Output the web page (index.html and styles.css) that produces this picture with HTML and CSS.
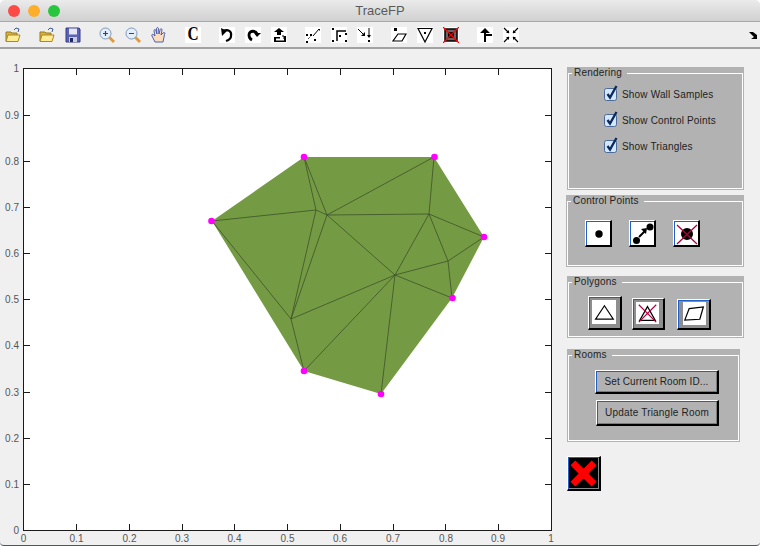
FILE: index.html
```html
<!DOCTYPE html>
<html lang="en">
<head>
    <meta charset="UTF-8">
    <meta name="viewport" content="width=device-width, initial-scale=1.0">
    <title>TraceFP</title>
    <link rel="stylesheet" href="styles.css">
</head>
<body>
<div class="window">
    <div class="titlebar">
        <div class="lights">
            <span class="light red"></span>
            <span class="light orange"></span>
            <span class="light green"></span>
        </div>
        <div class="title">TraceFP</div>
    </div>

    <!-- Toolbar -->
    <div class="toolbar">
        <svg class="tool" viewBox="0 0 16 16"><path d="M9 3l2-2 3 1-1 3" fill="none" stroke="#3a5a90"/><path d="M1 5h5l1 1h5v8H1z" fill="#d8b040" stroke="#9a7a18"/><path d="M3 8h12l-2 6.500H1z" fill="#ffec94" stroke="#a88a20"/></svg>
        <svg class="tool sep" viewBox="0 0 16 16"><path d="M9 3l2-2 3 1-1 3" fill="none" stroke="#3a5a90"/><path d="M1 5h5l1 1h5v8H1z" fill="#d8b040" stroke="#9a7a18"/><path d="M3 8h12l-2 6.500H1z" fill="#ffec94" stroke="#a88a20"/></svg>
        <svg class="tool" viewBox="0 0 16 16"><path d="M1 1h13l1 1v13H1z" fill="#5a62b8" stroke="#343c84"/><rect x="4" y="1.500" width="8" height="6" fill="#e4e6f4"/><rect x="4" y="10" width="8" height="5" fill="#c8cce4"/><rect x="5" y="11" width="3" height="4" fill="#20285c"/></svg>
        <svg class="tool sep" viewBox="0 0 16 16"><path d="M10 10l5 5" stroke="#e09838" stroke-width="2.800"/><circle cx="6.500" cy="6.500" r="5.500" fill="#e4eefa" stroke="#7c98b8"/><path d="M4 6.500h5M6.500 4v5" stroke="#2a3f9c" stroke-width="1.200"/></svg>
        <svg class="tool" viewBox="0 0 16 16"><path d="M10 10l5 5" stroke="#e09838" stroke-width="2.800"/><circle cx="6.500" cy="6.500" r="5.500" fill="#e4eefa" stroke="#7c98b8"/><path d="M4 6.500h5" stroke="#2a3f9c" stroke-width="1.200"/></svg>
        <svg class="tool" viewBox="0 0 16 16"><path d="M4 15L1 9c-1-2 1-2 2-1l1 1-1-5c0-2 2-2 2 0l1 3-.5-5c0-2 2-2 2 0l.5 5 1-4c.5-2 2-1.500 2 0l-1 5 2-2c1.500-1 2.500 0 1.500 1.500L12 15z" fill="#fbdcc0" stroke="#3a52a8" stroke-width=".9"/></svg>
        <div class="tool sep boxed c-tool"><span>C</span></div>
        <svg class="tool sep boxed" viewBox="0 0 16 16"><path d="M4 4c5-2 9 0 8 5 0 2-2 4-5 5" fill="none" stroke="#000" stroke-width="2.200"/><path d="M2 1l1 8 5-5z"/></svg>
        <svg class="tool boxed" viewBox="0 0 16 16"><path d="M12 8c0-5-8-5-8 0 0 2 1 4 3 5" fill="none" stroke="#000" stroke-width="2.800"/><path d="M16 6l-4 4-3-4z"/></svg>
        <svg class="tool boxed" viewBox="0 0 16 16"><path d="M8 1L3 5h3v3h4V5h3zM3 10h6v1.500H5v2h8V9h2v6H3z"/><path d="M11 9h2v3h2" fill="none" stroke="#000"/></svg>
        <svg class="tool sep boxed" viewBox="0 0 16 16"><path d="M8 9l6-7" stroke="#000" fill="none"/><path d="M13 2h2v2z"/><path d="M1 14h2v2H1zM5 7h2v2H5zM1 7h2v2H1zM9 12h2v2H9z"/><path d="M3 12l3-3" stroke="#000" stroke-dasharray="1 1"/></svg>
        <svg class="tool boxed" viewBox="0 0 16 16"><path d="M6 14V4h9" fill="none" stroke="#000" stroke-width="1.500"/><path d="M1 1h2v2H1zM1 13h2v2H1zM14 6h2v2h-2zM14 13h2v2h-2zM8 8h2v2H8z"/></svg>
        <svg class="tool boxed" viewBox="0 0 16 16"><path d="M1 2l7 7M12 1v9" stroke="#000" fill="none"/><path d="M8 9H4l4-4zM10 8h4l-2 3z"/><path d="M11 13h2v2h-2z"/></svg>
        <svg class="tool sep boxed" viewBox="0 0 16 16"><path d="M7 7h8l-4 7H2z" fill="none" stroke="#000" stroke-width="1.200"/><path d="M3 1h3v3H3z"/></svg>
        <svg class="tool boxed" viewBox="0 0 16 16"><path d="M1 1.500h14L8 15z" fill="none" stroke="#000" stroke-width="1.200"/><path d="M7 5h2v2H7z"/></svg>
        <svg class="tool boxed" viewBox="0 0 16 16"><rect x="2" y="2" width="12" height="12" fill="#666" stroke="#000" stroke-width="1.500"/><rect x="5" y="5" width="6" height="6"/><path d="M0 0l16 16M16 0L0 16" stroke="#f00" stroke-width="1.300"/></svg>
        <svg class="tool sep boxed" viewBox="0 0 16 16"><path d="M8 1L3 6h4v9h2V6h4z"/><path d="M9 7h6v2H9z"/></svg>
        <svg class="tool boxed" viewBox="0 0 16 16"><path d="M1 1l5 5M15 1l-5 5M1 15l5-5M15 15l-5-5" stroke="#000" stroke-width="1.200"/><path d="M6 3v3H3zM10 3v3h3zM6 13v-3H3zM10 13v-3h3z"/></svg>
        <svg class="chevron" viewBox="0 0 8 7"><path d="M0 0h4l4 3v4H2l3-2z"/></svg>
    </div>

    <div class="main">
        <svg class="plot" viewBox="0 49 556 497" width="556" height="497">
            <rect x="23.500" y="68.500" width="528" height="462" fill="#fff"/>
            <path class="floor" d="M304 157H434L484 237 452 298 381 394 304 371 212 221Z"/>
            <path class="mesh" d="M304 157L316 210M304 157L327 215M212 221L316 210M212 221L291 319M316 210L291 319M316 210L327 215M327 215L291 319M327 215L434 157M327 215L429 214M327 215L395 275M434 157L429 214M429 214L484 237M429 214L448 261M429 214L395 275M448 261L484 237M448 261L452 298M448 261L395 275M395 275L452 298M395 275L381 394M395 275L304 371M395 275L291 319M291 319L304 371"/>
            <g class="pts">
                <circle cx="304" cy="157" r="3.300"/><circle cx="434.500" cy="157" r="3.300"/><circle cx="484" cy="237" r="3.300"/>
                <circle cx="452.500" cy="298" r="3.300"/><circle cx="381" cy="394" r="3.300"/><circle cx="304" cy="371" r="3.300"/>
                <circle cx="211.500" cy="221" r="3.300"/>
            </g>
            <rect class="frame" x="23.500" y="68.500" width="528" height="462"/>
            <path class="ticks" d="M76.500 530v-6M129.500 530v-6M182.500 530v-6M234.500 530v-6M287.500 530v-6M340.500 530v-6M393.500 530v-6M445.500 530v-6M498.500 530v-6M76.500 69v6M129.500 69v6M182.500 69v6M234.500 69v6M287.500 69v6M340.500 69v6M393.500 69v6M445.500 69v6M498.500 69v6M24 484.500h6M24 438.500h6M24 392.500h6M24 345.500h6M24 299.500h6M24 253.500h6M24 207.500h6M24 161.500h6M24 115.500h6M551 484.500h-6M551 438.500h-6M551 392.500h-6M551 345.500h-6M551 299.500h-6M551 253.500h-6M551 207.500h-6M551 161.500h-6M551 115.500h-6"/>
            <g class="xlabels">
                <text x="23.500" y="542">0</text><text x="76.500" y="542">0.1</text><text x="129.500" y="542">0.2</text><text x="182" y="542">0.3</text><text x="234.500" y="542">0.4</text><text x="287.500" y="542">0.5</text><text x="340" y="542">0.6</text><text x="393" y="542">0.7</text><text x="446" y="542">0.8</text><text x="498" y="542">0.9</text><text x="551" y="542">1</text>
            </g>
            <g class="ylabels">
                <text x="19" y="534">0</text><text x="19" y="488">0.1</text><text x="19" y="442">0.2</text><text x="19" y="396">0.3</text><text x="19" y="349">0.4</text><text x="19" y="303">0.5</text><text x="19" y="257">0.6</text><text x="19" y="211">0.7</text><text x="19" y="165">0.8</text><text x="19" y="119">0.9</text><text x="19" y="72">1</text>
            </g>
        </svg>

        <div class="side">
            <div class="panel">
                <fieldset>
                    <legend>Rendering</legend>
                    <div class="rendering">
                        <label class="check-row"><svg class="check" viewBox="0 0 14 16"><rect x=".5" y="3.500" width="12" height="12" rx="2" fill="#d4e6fa" stroke="#4a6a9c"/><path d="M3.500 9l2.500 3.500L12.500 1" fill="none" stroke="#0a2a5c" stroke-width="2.300"/></svg>Show Wall Samples</label>
                        <label class="check-row"><svg class="check" viewBox="0 0 14 16"><rect x=".5" y="3.500" width="12" height="12" rx="2" fill="#d4e6fa" stroke="#4a6a9c"/><path d="M3.500 9l2.500 3.500L12.500 1" fill="none" stroke="#0a2a5c" stroke-width="2.300"/></svg>Show Control Points</label>
                        <label class="check-row"><svg class="check" viewBox="0 0 14 16"><rect x=".5" y="3.500" width="12" height="12" rx="2" fill="#d4e6fa" stroke="#4a6a9c"/><path d="M3.500 9l2.500 3.500L12.500 1" fill="none" stroke="#0a2a5c" stroke-width="2.300"/></svg>Show Triangles</label>
                    </div>
                </fieldset>
            </div>

            <div class="panel points-panel">
                <fieldset>
                    <legend>Control Points</legend>
                    <div class="points">
                        <button class="icon-btn small"><svg viewBox="0 0 24 24"><circle cx="12" cy="12" r="3.700"/></svg></button>
                        <button class="icon-btn small"><svg viewBox="0 0 24 24"><circle cx="5.500" cy="18.500" r="3.500"/><circle cx="19" cy="5" r="3.500"/><path d="M8 15l6-6" stroke="#000" stroke-width="2"/><path d="M16 6l-6 1 5 5z"/></svg></button>
                        <button class="icon-btn small"><svg viewBox="0 0 24 24"><circle cx="12" cy="12" r="6"/><path d="M2 3l20 19M22 3L2 22" stroke="#b00040" stroke-width="1.300"/></svg></button>
                    </div>
                </fieldset>
            </div>

            <div class="panel polygons-panel">
                <fieldset>
                    <legend>Polygons</legend>
                    <div class="polygons">
                        <button class="icon-btn large"><svg viewBox="0 0 27 26"><path d="M14 6L24 21H4z" fill="none" stroke="#000" stroke-width="1.300"/></svg></button>
                        <button class="icon-btn large second"><svg viewBox="0 0 25 24"><path d="M12.500 5L21 20H4z" fill="none" stroke="#000" stroke-width="1.300"/><path d="M3 3l19 19M22 3L3 22" stroke="#b00040" stroke-width="1.300"/></svg></button>
                        <button class="icon-btn large third"><svg viewBox="0 0 26 23"><path d="M2 19L7 6l16-2-4 14z" fill="none" stroke="#000" stroke-width="1.400"/></svg></button>
                    </div>
                </fieldset>
            </div>

            <div class="panel rooms-panel">
                <fieldset>
                    <legend>Rooms</legend>
                    <div class="rooms">
                        <button class="text-btn">Set Current Room ID...</button>
                        <button class="text-btn update">Update Triangle Room</button>
                    </div>
                </fieldset>
            </div>

            <button class="icon-btn close"><svg viewBox="0 0 30 30"><path d="M4 4l22 22M26 4L4 26" stroke="#f00" stroke-width="7"/></svg></button>
        </div>
    </div>
</div>
</body>
</html>
```

FILE: styles.css
```css
body {
    margin: 0;
    background: #fff;
    font-family: "Liberation Sans", Arial, sans-serif;
}
.window {
    width: 760px;
    height: 546px;
    box-sizing: border-box;
    background-color: #f0f0f0;
    border-bottom: 1px solid #4c5660;
    border-radius: 5px 5px 4px 4px;
    overflow: hidden;
}

/* Title bar */
.titlebar {
    height: 22px;
    box-sizing: border-box;
    display: flex;
    align-items: center;
    background: linear-gradient(#ebebeb, #d0d0d0);
    border-bottom: 1px solid #a8a8a8;
}
.lights {
    display: flex;
    gap: 8px;
    margin-left: 8px;
}
.light {
    width: 12px;
    height: 12px;
    border-radius: 50%;
}
.red {
    background-color: #fc4b47;
}
.orange {
    background-color: #fdae2b;
}
.green {
    background-color: #28c63f;
}
.title {
    flex: 1;
    margin-left: -60px;
    text-align: center;
    font-size: 13px;
    color: #5a5a5a;
}

/* Toolbar */
.toolbar {
    height: 27px;
    box-sizing: border-box;
    display: flex;
    align-items: center;
    gap: 10px;
    padding: 1px 3px 0 5px;
    background-color: #eeeeee;
    border-bottom: 2px solid #a2a2a2;
}
.tool {
    width: 16px;
    height: 16px;
    flex: none;
}
.tool.sep {
    margin-left: 8px;
}
.tool.boxed {
    background-color: #fff;
}
.c-tool {
    display: flex;
    align-items: center;
    justify-content: center;
    font-family: "Liberation Serif", serif;
    font-weight: bold;
    font-size: 14px;
    line-height: 16px;
}
.c-tool span {
    transform: scale(1.1, 1.35);
}
.chevron {
    width: 8px;
    height: 7px;
    margin-left: auto;
}

/* Main area */
.main {
    display: flex;
}
.plot {
    flex: none;
    display: block;
}
.floor {
    fill: #749b44;
}
.mesh {
    fill: none;
    stroke: #3d5228;
    stroke-width: 0.8;
}
.pts {
    fill: #ff00ff;
}
.frame {
    fill: none;
    stroke: #1a1a1a;
    stroke-width: 1;
}
.ticks {
    fill: none;
    stroke: #1a1a1a;
    stroke-width: 1;
}
.xlabels text,
.ylabels text {
    font-size: 10px;
    fill: #555;
}
.xlabels text {
    text-anchor: middle;
}
.ylabels text {
    text-anchor: end;
}

/* Side panels */
.side {
    margin-left: 11px;
    padding-top: 18px;
    width: 177px;
}
.panel {
    background-color: #b2b2b2;
    padding: 0 1px 1px 1px;
    color: #222;
    font-size: 10px;
}
fieldset {
    margin: 0;
    padding: 0;
    border: 1px solid #fff;
    min-width: 0;
}
legend {
    margin-left: 3px;
    padding: 0 5px 0 2px;
    line-height: 12px;
    letter-spacing: 0.2px;
}
.rendering {
    padding: 9px 0 35px 35px;
    display: flex;
    flex-direction: column;
}
.check-row {
    display: flex;
    align-items: center;
    height: 13px;
    margin-bottom: 13px;
    letter-spacing: 0.17px;
}
.check-row:last-child {
    margin-bottom: 0;
}
.check {
    width: 14px;
    height: 16px;
    margin: -4px 4px 0 0;
    flex: none;
}
.points-panel {
    margin: 5px 0 0 -1px;
}
.points {
    padding: 13px 0 18px 17px;
    display: flex;
    gap: 17px;
}
.polygons-panel {
    margin-top: 9px;
}
.polygons {
    padding: 8px 0 6px 19px;
    display: flex;
    align-items: flex-end;
    gap: 10px;
}
.rooms-panel {
    margin-top: 11px;
    width: 171px;
}
.rooms {
    padding: 9px 0 14px 26px;
}

/* Buttons */
button {
    padding: 0;
    font-family: inherit;
    box-sizing: border-box;
    border-style: solid;
    border-width: 1px 2px 2px 1px;
    border-color: #fff #000 #000 #fff;
    box-shadow: inset 1px 1px 0 #1f5fc8;
}
button svg {
    display: block;
}
.icon-btn {
    background-color: #fff;
}
.icon-btn.small {
    width: 27px;
    height: 27px;
    padding: 1px 0 0 1px;
}
.icon-btn.small svg {
    width: 24px;
    height: 24px;
}
.icon-btn.large {
    width: 34px;
    height: 34px;
    padding: 3px 4px 4px 3px;
    background-color: #8e8e8e;
}
.icon-btn.large svg {
    width: 100%;
    height: 100%;
    background-color: #fff;
}
.icon-btn.large.second {
    width: 33px;
    height: 32px;
}
.icon-btn.large.third {
    height: 31px;
    margin-left: 2px;
    padding: 2px 3px 3px 5px;
}
.text-btn {
    display: block;
    width: 124px;
    height: 24px;
    background-color: #b2b2b2;
    color: #222;
    font-size: 10px;
    letter-spacing: 0.1px;
    box-shadow: inset 1px 1px 0 #1f5fc8, inset -1px -1px 0 #7c7c7c;
}
.text-btn.update {
    width: 123px;
    height: 26px;
    margin: 6px 0 0 1px;
    letter-spacing: 0.2px;
}
.icon-btn.close {
    display: block;
    width: 34px;
    height: 35px;
    margin-top: 14px;
    padding: 1px;
    background-color: #000;
    box-shadow: inset 1px 1px 0 #1f5fc8, inset -1px -1px 0 #8a8a8a;
}
```
